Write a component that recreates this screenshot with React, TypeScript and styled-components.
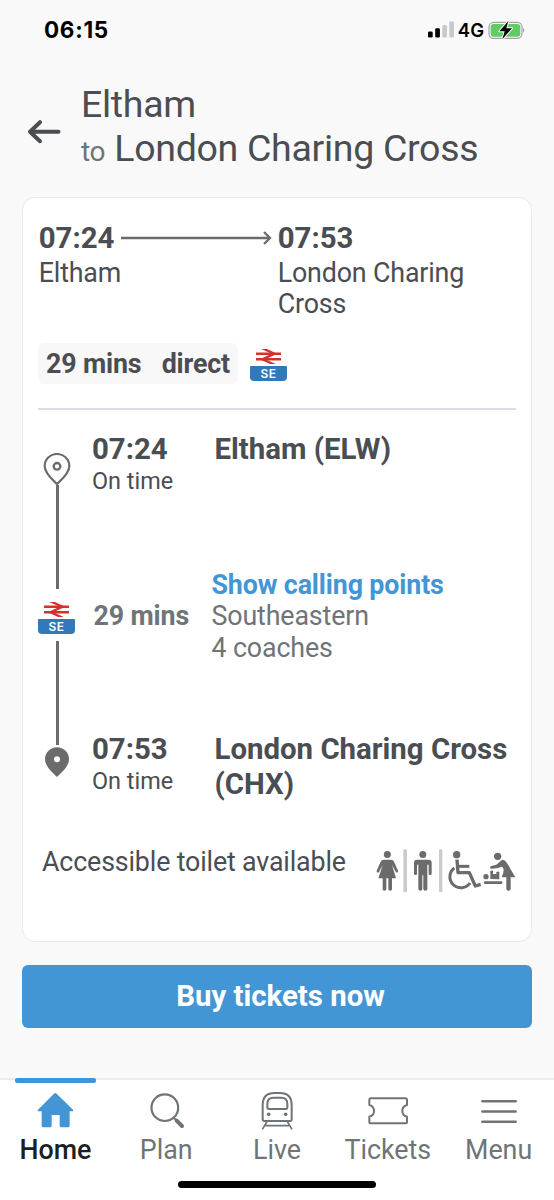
import React from "react";
import styled, { createGlobalStyle } from "styled-components";

const GlobalStyle = createGlobalStyle`
  * { box-sizing: border-box; }
  body { margin: 0; background: #f9f9f9; font-family: Roboto, "Liberation Sans", sans-serif; }
`;

const ink = "#4a4d52";
const muted = "#6f7478";
const blue = "#4396d5";
const iconGrey = "#6b6b6b";

const Screen = styled.div`
  width: 554px;
  height: 1200px;
  display: flex;
  flex-direction: column;
  background: #f9f9f9;
  color: ${ink};
  overflow: hidden;
  position: relative;
`;

const StatusBar = styled.div`
  height: 60px;
  flex: none;
  display: flex;
  justify-content: space-between;
  padding: 0 29px 0 44px;
  align-items: center;
  font-family: Inter, "Liberation Sans", sans-serif;
  color: #000;
`;

const Clock = styled.span`
  font-size: 22.5px;
  font-weight: 700;
  line-height: 26px;
  letter-spacing: 0.7px;
`;

const StatusIcons = styled.div`
  display: flex;
  align-items: center;
`;

const Network = styled.span`
  font-size: 18.5px;
  font-weight: 600;
  line-height: 22px;
  margin: 0 4px 0 3px;
`;

const Header = styled.header`
  flex: none;
  display: flex;
  padding: 22px 0 0 27px;
  height: 137px;
`;

const BackIcon = styled.svg`
  flex: none;
  width: 35px;
  height: 26px;
  margin: 37px 19px 0 0;
`;

const Title = styled.h1`
  margin: 0;
  font-size: 37.5px;
  line-height: 44px;
  font-weight: 400;
  letter-spacing: -0.3px;
  white-space: nowrap;
`;

const To = styled.span`
  font-size: 28px;
  color: ${muted};
  margin-right: 9px;
`;

const Card = styled.section`
  flex: none;
  margin: 0 22px;
  height: 745px;
  background: #fff;
  border: 1px solid #e9e9ee;
  border-radius: 13px;
  padding: 22.5px 15px 0;
`;

const Journey = styled.div`
  display: grid;
  grid-template-columns: 239px 1fr;
  padding-left: 0.7px;
`;

const TimeLine = styled.div`
  display: flex;
  align-items: center;
  gap: 7px;
`;

const Time = styled.div`
  font-size: 29.4px;
  line-height: 34.5px;
  font-weight: 700;
  white-space: nowrap;
`;

const Place = styled.div`
  font-size: 26.8px;
  letter-spacing: -0.15px;
  line-height: 31px;
  margin-top: 3px;
`;

const Summary = styled.div`
  display: flex;
  align-items: center;
  gap: 12px;
  margin-top: 23px;
`;

const Chip = styled.div`
  width: 200px;
  height: 41px;
  border-radius: 6px;
  background: #f8f8f8;
  padding: 0 8px;
  display: flex;
  justify-content: space-between;
  font-size: 26.8px;
  letter-spacing: -0.15px;
  line-height: 42px;
  font-weight: 700;
`;

const Badge = styled.div`
  width: 37px;
  height: 33px;
  flex: none;
  display: flex;
  flex-direction: column;
  align-items: center;
  align-self: flex-start;
  padding-top: 1px;

  ${Summary} & {
    margin-top: 5px;
  }
`;

const BadgeCode = styled.div`
  width: 37px;
  height: 15px;
  margin-top: 2px;
  border-radius: 1px 1px 4px 4px;
  background: #3279b9;
  color: #fff;
  font: 600 12px/15px Inter, sans-serif;
  letter-spacing: 0.5px;
  text-align: center;
`;

const Divider = styled.hr`
  margin: 24px 0 0;
  border: 0;
  height: 1.5px;
  background: #dcdce8;
`;

const Timeline = styled.div`
  display: flex;
  margin-top: 22px;
  height: 415px;
`;

const Rail = styled.div`
  width: 38px;
  flex: none;
  display: flex;
  flex-direction: column;
  align-items: center;
  padding-top: 21.5px;
`;

const Track = styled.div`
  width: 3px;
  height: 104px;
  background: ${iconGrey};
`;

const Gap = styled.div<{ $size: number }>`
  height: ${(p) => p.$size}px;
`;

const Stops = styled.div`
  flex: 1;
  display: flex;
  flex-direction: column;
  padding-left: 16px;
`;

const Stop = styled.div<{ $height: number }>`
  display: grid;
  grid-template-columns: 122.5px 1fr;
  height: ${(p) => p.$height}px;
  align-content: start;
`;

const Status = styled.div`
  font-size: 23.4px;
  line-height: 27px;
  margin-top: 1.6px;
`;

const Leg = styled.div`
  display: grid;
  grid-template-columns: 118px 1fr;
  height: 162px;
  padding-left: 1.5px;
  align-content: start;
  font-size: 26.8px;
  letter-spacing: -0.13px;
  line-height: 31.3px;
  color: ${muted};
`;

const Duration = styled.div`
  padding-top: 31.3px;
  font-weight: 700;
`;

const CallingLink = styled.a`
  display: block;
  color: ${blue};
  font-weight: 700;
`;

const Facilities = styled.div`
  display: flex;
  justify-content: space-between;
  padding-left: 4px;
  font-size: 26.8px;
  letter-spacing: -0.15px;
  line-height: 31px;
`;

const FacilityIcons = styled.svg`
  width: 140px;
  height: 44px;
  margin-top: 2px;
  flex: none;
`;

const BuyButton = styled.button`
  flex: none;
  margin: 23px 22px 0;
  height: 63px;
  padding: 0 0 0 7px;
  border: 0;
  border-radius: 6px;
  background: ${blue};
  color: #fff;
  font: 700 29.4px/63px Roboto, sans-serif;
`;

const TabBar = styled.nav`
  margin-top: auto;
  flex: none;
  height: 122px;
  border-top: 2px solid #ececec;
  background: #fff;
  display: grid;
  grid-template-columns: repeat(5, 1fr);
`;

const Tab = styled.div<{ $active?: boolean }>`
  display: flex;
  flex-direction: column;
  align-items: center;
  font-size: 26.8px;
  line-height: 34px;
  font-weight: ${(p) => (p.$active ? 500 : 400)};
  color: ${(p) => (p.$active ? "#1d1e22" : muted)};

  &::before {
    content: "";
    width: 81px;
    height: 5px;
    margin-top: -2px;
    border-radius: 2px;
    background: ${(p) => (p.$active ? blue : "transparent")};
  }

  svg {
    width: 44px;
    height: 42px;
    margin: 8px 0 0;
  }
`;

const HomeIndicator = styled.div`
  position: absolute;
  left: 178px;
  bottom: 12px;
  width: 198px;
  height: 7px;
  border-radius: 4px;
  background: #000;
`;

const OperatorBadge = () => (
  <Badge>
    <svg width="25" height="15" viewBox="0 0 62 39" preserveAspectRatio="none">
      <g stroke="#d3312b" fill="none">
        <path d="M1,-8.9 46,12.4 16,26.6 61,47.9" strokeWidth="6" />
        <path d="M0,12.4H62m0,14.2H0" strokeWidth="6.4" />
      </g>
    </svg>
    <BadgeCode>SE</BadgeCode>
  </Badge>
);

const Signal = () => (
  <svg width="27" height="18" viewBox="0 0 27 18">
    <rect x="0" y="10.5" width="4.7" height="6" rx="1.3" fill="#000" />
    <rect x="7.2" y="7.2" width="4.7" height="9.3" rx="1.3" fill="#000" />
    <rect x="14.3" y="4" width="4.7" height="12.5" rx="1.3" fill="#c9c9c9" />
    <rect x="21.3" y="0.5" width="4.7" height="16" rx="1.3" fill="#c9c9c9" />
  </svg>
);

const Battery = () => (
  <svg width="37" height="20" viewBox="0 0 111 60">
    <rect x="3" y="7" width="99" height="48" rx="14" fill="#f9f9f9" stroke="#a3a3a6" strokeWidth="3.5" />
    <rect x="8" y="12" width="89" height="38" rx="9" fill="#61cc66" />
    <path d="M105 24c5 2 5 12 0 14z" fill="#a3a3a6" />
    <path d="M61 3 34 34h16l-7 24 29-33H55z" fill="#000" stroke="#f9f9f9" strokeWidth="6" paintOrder="stroke" strokeLinejoin="round" />
  </svg>
);

const PinOutline = () => (
  <svg width="28" height="32" viewBox="0 0 84 96">
    <path d="M42 93C31 82 5 62 5 39a37 36 0 0 1 74 0C79 62 53 82 42 93z" fill="none" stroke={iconGrey} strokeWidth="6.5" />
    <circle cx="42" cy="40" r="10" fill="none" stroke={iconGrey} strokeWidth="7" />
  </svg>
);

const PinSolid = () => (
  <svg width="24" height="30" viewBox="0 0 72 90">
    <path fillRule="evenodd" d="M36 90C26 79 0 60 0 37a36 36 0 0 1 72 0C72 60 46 79 36 90zM36 28a9 9 0 1 0 0 18a9 9 0 0 0 0-18z" fill={iconGrey} />
  </svg>
);

export default function App() {
  return (
    <>
      <GlobalStyle />
      <Screen>
        <StatusBar>
          <Clock>06:15</Clock>
          <StatusIcons>
            <Signal />
            <Network>4G</Network>
            <Battery />
          </StatusIcons>
        </StatusBar>

        <Header>
          <BackIcon viewBox="0 0 35 26" fill="none" stroke={ink} strokeWidth="4" strokeLinecap="round" strokeLinejoin="round">
            <path d="M31.500 12.700H4M13 3.200 3 12.700l10 9.500" />
          </BackIcon>
          <Title>
            <div>Eltham</div>
            <div>
              <To>to</To>London Charing Cross
            </div>
          </Title>
        </Header>

        <Card>
          <Journey>
            <div>
              <TimeLine>
                <Time>07:24</Time>
                <svg width="151" height="14" viewBox="0 0 151 14" fill="none" stroke={iconGrey} strokeWidth="2.3">
                  <path d="M0 7h149M143 1l6 6-6 6" />
                </svg>
              </TimeLine>
              <Place>Eltham</Place>
            </div>
            <div>
              <Time>07:53</Time>
              <Place>
                London Charing
                <br />
                Cross
              </Place>
            </div>
          </Journey>

          <Summary>
            <Chip>
              <span>29 mins</span>
              <span>direct</span>
            </Chip>
            <OperatorBadge />
          </Summary>
          <Divider />

          <Timeline>
            <Rail>
              <PinOutline />
              <Track />
              <Gap $size={12} />
              <OperatorBadge />
              <Gap $size={7} />
              <Track />
              <Gap $size={2} />
              <PinSolid />
            </Rail>
            <Stops>
              <Stop $height={138.7}>
                <div>
                  <Time>07:24</Time>
                  <Status>On time</Status>
                </div>
                <Time>Eltham (ELW)</Time>
              </Stop>
              <Leg>
                <Duration>29 mins</Duration>
                <div>
                  <CallingLink>Show calling points</CallingLink>
                  <div>Southeastern</div>
                  <div>4 coaches</div>
                </div>
              </Leg>
              <Stop $height={100}>
                <div>
                  <Time>07:53</Time>
                  <Status>On time</Status>
                </div>
                <Time>
                  London Charing Cross
                  <br />
                  (CHX)
                </Time>
              </Stop>
            </Stops>
          </Timeline>

          <Facilities>
            <span>Accessible toilet available</span>
            <FacilityIcons viewBox="48 56 420 132" fill={iconGrey}>
              <circle cx="82" cy="72.500" r="10.500" />
              <path d="M71 88h22q7 0 9 6l12 27q1 4-2 5.500t-5-2L96 104l12 40H96v33q0 4-5.500 4T85 177v-33h-6v33q0 4-5.500 4T68 177v-33H55l13-40-11 21q-2 3-5 1.500T50 121l12-27q2-6 9-6z" />
              <rect x="130" y="57" width="11" height="129" rx="4" fill="#cbcbcb" />
              <circle cx="188.500" cy="72.500" r="10.500" />
              <path d="M171 88h35q9 0 9 9v33q0 4-4.500 4t-4.500-4v-27h-4v73q0 5-6 5t-6-5v-41h-3v41q0 5-6 5t-6-5v-73h-4v27q0 4-4.500 4T162 130V97q0-9 9-9z" />
              <rect x="237" y="57" width="10" height="129" rx="4" fill="#cbcbcb" />
              <circle cx="290" cy="73" r="11" />
              <g fill="none" stroke={iconGrey} strokeWidth="9" strokeLinejoin="round">
                <path d="M291 88l3 39h34l18 40 16-5" strokeWidth="10" />
                <path d="M292 108h36" />
                <path d="M283 113a33 33 0 1 0 47 45" />
              </g>
              <circle cx="413" cy="78" r="11" />
              <path d="M421 93q7-10 17 1 7 9 12 20l16 27h-14v34q0 6-6.500 6t-6.500-6v-34h-14q6-12 6-22-1-7-5-10l-13 4q-9 2-21 2-4-7 2-8l15-4z" />
              <circle cx="378" cy="139" r="8" />
              <path d="M391 146v-24q5-3 8 0v9h10v-6q5-3 9 0v22z" />
              <rect x="372" y="153" width="55" height="8" rx="3" />
            </FacilityIcons>
          </Facilities>
        </Card>

        <BuyButton>Buy tickets now</BuyButton>

        <TabBar>
          <Tab $active>
            <svg viewBox="100 63 132 126" fill={blue}>
              <path d="M163 71q4-4 8 0l49 48q3 5-3 5h-7v43q0 5-5 5h-20q-5 0-5-5v-32h-24v32q0 5-5 5h-20q-5 0-5-5v-43h-8q-6 0-3-5z" />
            </svg>
            Home
          </Tab>
          <Tab>
            <svg viewBox="432 63 132 126" fill="none" stroke={muted}>
              <circle cx="494.500" cy="113" r="40" strokeWidth="6.500" />
              <path d="M521 144l8 7" strokeWidth="6" />
              <path d="M530 152l16 16" strokeWidth="12" strokeLinecap="round" />
            </svg>
            Plan
          </Tab>
          <Tab>
            <svg viewBox="105 63 132 126" fill="none" stroke={muted} strokeWidth="6">
              <path d="M128 148v-43q0-36 36-36h15q36 0 36 36v43q0 5-5 5h-77q-5 0-5-5z" />
              <path d="M142 112v-10q0-19 18-19h24q18 0 18 19v10q0 5-5 5h-50q-5 0-5-5z" />
              <circle cx="146" cy="133" r="5.500" fill={muted} stroke="none" />
              <circle cx="197" cy="133" r="5.500" fill={muted} stroke="none" />
              <path d="M142 153l-15 25M201 153l15 25M136 167h71" strokeWidth="5" />
            </svg>
            Live
          </Tab>
          <Tab>
            <svg viewBox="438 63 132 126" fill="none" stroke={muted} strokeWidth="6" strokeLinejoin="round">
              <path d="M453 85h103q5 0 5 5v15q-14 4-14 18t14 17v15q0 5-5 5H453q-5 0-5-5v-15q14-3 14-17t-14-18V90q0-5 5-5z" />
            </svg>
            Tickets
          </Tab>
          <Tab>
            <svg viewBox="771 63 132 126" fill="none" stroke={muted} strokeWidth="7.500" strokeLinecap="round">
              <path d="M787 94h100M787 124.500h100M787 155h100" />
            </svg>
            Menu
          </Tab>
        </TabBar>
        <HomeIndicator />
      </Screen>
    </>
  );
}
